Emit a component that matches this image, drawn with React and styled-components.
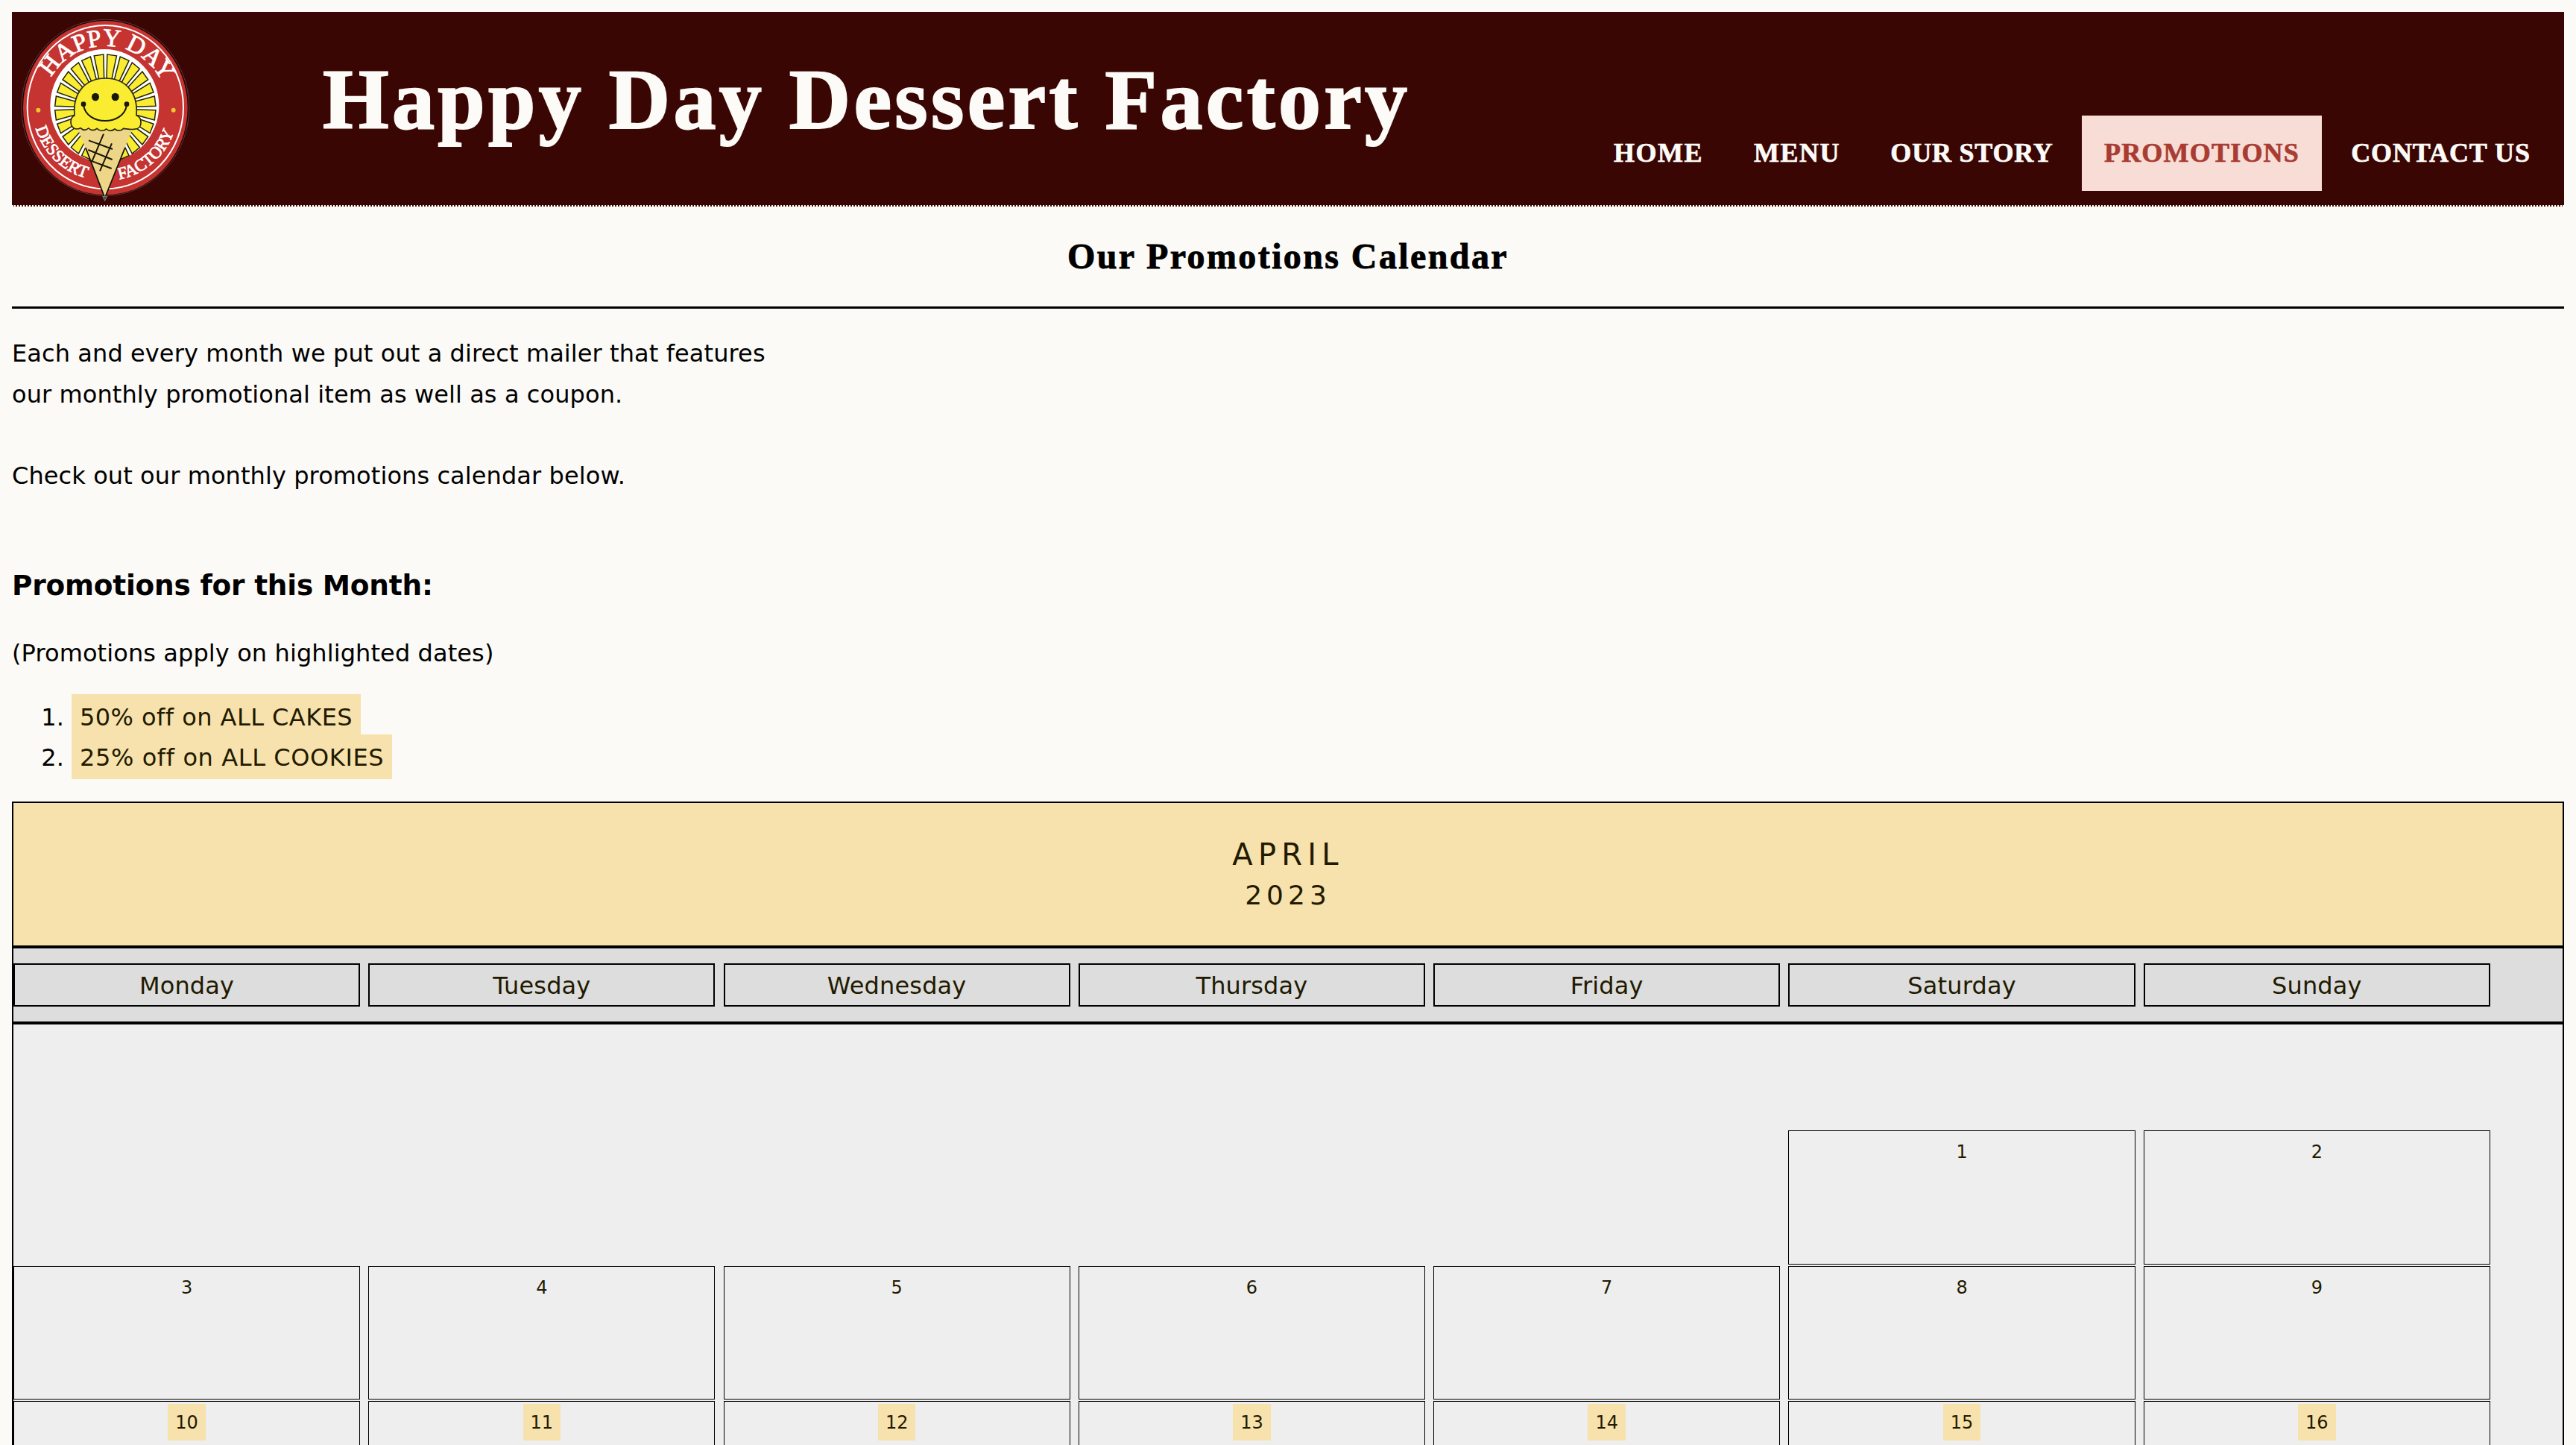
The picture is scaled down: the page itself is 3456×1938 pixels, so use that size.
import React from "react";
import styled, { createGlobalStyle } from "styled-components";

const SANS = `Verdana, "DejaVu Sans", sans-serif`;
const SERIF = `Baskerville, "Liberation Serif", serif`;

const GlobalStyle = createGlobalStyle`
  * { box-sizing: border-box; }
  body {
    margin: 16px 16px 0;
    background: #fbfaf6;
    color: #000;
    font-family: ${SANS};
    font-size: 32px;
    height: 1922px;
    overflow: hidden;
  }
`;

const Header = styled.header`
  display: flex;
  height: 261px;
  background: #3a0603;
  border-bottom: 2px dotted #fcfbf7;
`;

const LogoSvg = styled.svg`
  flex: none;
  width: 247px;
  height: 259px;
`;

const SiteTitle = styled.h1`
  margin: 48px 0 0 170px;
  flex: none;
  font: bold 114px/140px ${SERIF};
  letter-spacing: 4.3px;
  -webkit-text-stroke: 2px #fcfbf7;
  color: #fcfbf7;
  white-space: nowrap;
`;

const Nav = styled.nav`
  display: flex;
  gap: 10px;
  margin: 139px 16px 0 auto;
`;

const NavLink = styled.a`
  width: ${(p) => p.$width}px;
  height: 101px;
  text-align: center;
  white-space: nowrap;
  font: bold 36px/101px ${SERIF};
  letter-spacing: ${(p) => p.$track}px;
  -webkit-text-stroke: 0.7px currentColor;
  text-decoration: none;
  color: ${(p) => (p.$active ? "#a83c32" : "#fcfbf7")};
  background: ${(p) => (p.$active ? "#f8dcd6" : "transparent")};
`;

const PageTitle = styled.h2`
  margin: 26px 0 26px;
  text-align: center;
  font: bold 48px/82px ${SERIF};
  letter-spacing: 2.4px;
  -webkit-text-stroke: 0.9px #000;
`;

const Rule = styled.hr`
  margin: 0;
  border: 0;
  height: 3px;
  background: #000;
`;

const Intro = styled.p`
  margin: 33px 0 88px;
  line-height: 54.5px;
  letter-spacing: 0.09px;
`;

const SubTitle = styled.h3`
  margin: 0;
  font-size: 37.44px;
  line-height: 64px;
  letter-spacing: -0.2px;
`;

const Note = styled.p`
  margin: 32px 0;
  line-height: 54px;
  letter-spacing: 0.1px;
`;

const PromoList = styled.ol`
  margin: 0 0 32px;
  padding: 0 0 0 80px;
  line-height: 54px;
`;

const Highlight = styled.mark`
  padding: 12px 11px 10px;
  letter-spacing: ${(p) => p.$track}px;
  color: #221a00;
  background: #f7e2ad;
`;

const CalendarHead = styled.div`
  height: 195px;
  padding-top: 42px;
  border: 2px solid #000;
  background: #f7e2ad;
  color: #221a00;
  text-align: center;
`;

const Month = styled.div`
  font-size: 40px;
  line-height: 55px;
  letter-spacing: 7.2px;
`;

const Year = styled.div`
  font-size: 36px;
  line-height: 54px;
  letter-spacing: 6px;
`;

const WeekRow = styled.div`
  display: grid;
  grid-template-columns: repeat(7, 465.12px);
  column-gap: 11.2px;
`;

const Weekdays = styled(WeekRow)`
  height: 102px;
  padding: 20px 0;
  border: 2px solid #000;
  background: #ddd;
`;

const Weekday = styled.div`
  height: 58px;
  border: 2px solid #000;
  text-align: center;
  line-height: 56px;
  letter-spacing: 0.15px;
  color: #221a00;
`;

const Days = styled(WeekRow)`
  grid-auto-rows: 179px;
  row-gap: 2px;
  padding-top: 142px;
  grid-template-rows: 180px;
  height: 566px;
  overflow: hidden;
  border: 2px solid #000;
  border-bottom: 0;
  background: #eee;
`;

const Day = styled.div`
  grid-column: ${(p) => p.$column};
  border: 1px solid #000;
  padding-top: 9px;
  text-align: center;
  font-size: 24px;
  line-height: 38px;
  color: #221a00;
`;

const DayMark = styled.span`
  padding: 11px 10px 10px;
  background: #f7e2ad;
`;

const CX = 424;
const CY = 435;

function at(r, deg, ry = r) {
  const a = (deg * Math.PI) / 180;
  return `${(CX + r * Math.cos(a)).toFixed(1)} ${(CY - ry * Math.sin(a)).toFixed(1)}`;
}

const rays = Array.from({ length: 24 }, (_, i) => {
  const mid = 7.5 + i * 15;
  return [at(118, mid - 5), at(203, mid - 5.4, 216), at(203, mid + 5.4, 216), at(118, mid + 5)].join(" ");
});

function Logo() {
  return (
    <LogoSvg viewBox="48 48 741 777" role="img">
      <defs>
        <path id="arc-top" d={`M${at(250, 150.5)} A250 250 0 0 1 ${at(250, 22)}`} />
        <path id="arc-left" d={`M${at(292, 196)} A292 292 0 0 0 ${at(292, 257)}`} />
        <path id="arc-right" d={`M${at(292, 281)} A292 292 0 0 0 ${at(292, 343)}`} />
      </defs>
      <ellipse cx="424" cy="433" rx="337" ry="354" fill="#1c0202" stroke="#77595a" strokeWidth="2" />
      <ellipse cx="424" cy="434" rx="331" ry="350" fill="#c53431" />
      <ellipse cx="424" cy="431" rx="314" ry="329" fill="none" stroke="#fff" strokeWidth="6" />
      <ellipse cx="421" cy="425" rx="219" ry="227" fill="#fff" />
      {rays.map((points) => (
        <polygon key={points} points={points} fill="#f9ec31" stroke="#23230c" strokeWidth="4.5" />
      ))}
      <circle cx="154" cy="443" r="9" fill="#f3c52c" />
      <circle cx="698" cy="443" r="9" fill="#f3c52c" />
      <g fill="#fff" stroke="#fff" strokeWidth="2.5" fontFamily='"Liberation Serif", serif'>
        <text fontSize="100">
          <textPath href="#arc-top" textLength="548">HAPPY DAY</textPath>
        </text>
        <text fontSize="68">
          <textPath href="#arc-left" textLength="298">DESSERT</textPath>
        </text>
        <text fontSize="68">
          <textPath href="#arc-right" textLength="305">FACTORY</textPath>
        </text>
      </g>
      <path d="M314 520 L532 520 L422 796 Z" fill="#eed688" />
      <path d="M345 595 L422 796 L503 595" fill="none" stroke="#111006" strokeWidth="5" />
      <path d="M413 790 L422 808 L431 790 Z" fill="#3b4a44" stroke="#aaa" strokeWidth="2" />
      <path
        d="M300 464 C292 370 346 315 424 315 C503 315 557 370 549 464 C574 470 574 518 545 519 C530 523 515 519 497 517 C485 530 470 526 462 519 C450 528 438 528 428 519 C415 530 400 526 390 517 C378 527 366 525 356 516 C345 526 333 524 324 515 C305 525 285 515 285 490 C285 475 292 468 300 464 Z"
        fill="#f9ec31"
        stroke="#2a270a"
        strokeWidth="5"
      />
      <ellipse cx="384" cy="390" rx="15" ry="16" fill="#191806" />
      <ellipse cx="464" cy="390" rx="15" ry="16" fill="#191806" />
      <circle cx="336" cy="419" r="10" fill="#191806" />
      <circle cx="510" cy="419" r="10" fill="#191806" />
      <path d="M336 421 C346 508 500 508 510 421" fill="none" stroke="#191806" strokeWidth="6" />
      <path
        d="M417 539 L370 650 M450 577 L402 688 M357 565 L453 600 M355 603 L452 642 M358 644 L449 678"
        fill="none"
        stroke="#191806"
        strokeWidth="6"
      />
    </LogoSvg>
  );
}

const links = [
  { label: "HOME", width: 178, track: 1.5 },
  { label: "MENU", width: 174, track: 1.5 },
  { label: "OUR STORY", width: 275, track: 0.8 },
  { label: "PROMOTIONS", width: 322, track: 1.2, active: true },
  { label: "CONTACT US", width: 299, track: 0.9 },
];

const weekdays = ["Monday", "Tuesday", "Wednesday", "Thursday", "Friday", "Saturday", "Sunday"];
const dates = Array.from({ length: 16 }, (_, i) => i + 1);

export default function App() {
  return (
    <>
      <GlobalStyle />
      <Header>
        <Logo />
        <SiteTitle>Happy Day Dessert Factory</SiteTitle>
        <Nav>
          {links.map((l) => (
            <NavLink key={l.label} $width={l.width} $track={l.track} $active={l.active}>
              {l.label}
            </NavLink>
          ))}
        </Nav>
      </Header>
      <PageTitle>Our Promotions Calendar</PageTitle>
      <Rule />
      <Intro>
        Each and every month we put out a direct mailer that features
        <br />
        our monthly promotional item as well as a coupon.
        <br />
        <br />
        Check out our monthly promotions calendar below.
      </Intro>
      <SubTitle>Promotions for this Month:</SubTitle>
      <Note>(Promotions apply on highlighted dates)</Note>
      <PromoList>
        <li><Highlight $track={0.45}>50% off on ALL CAKES</Highlight></li>
        <li><Highlight $track={0.6}>25% off on ALL COOKIES</Highlight></li>
      </PromoList>
      <CalendarHead>
        <Month>APRIL</Month>
        <Year>2023</Year>
      </CalendarHead>
      <Weekdays>
        {weekdays.map((d) => (
          <Weekday key={d}>{d}</Weekday>
        ))}
      </Weekdays>
      <Days>
        {dates.map((n) => (
          <Day key={n} $column={((n + 4) % 7) + 1}>
            {n >= 10 ? <DayMark>{n}</DayMark> : n}
          </Day>
        ))}
      </Days>
    </>
  );
}
